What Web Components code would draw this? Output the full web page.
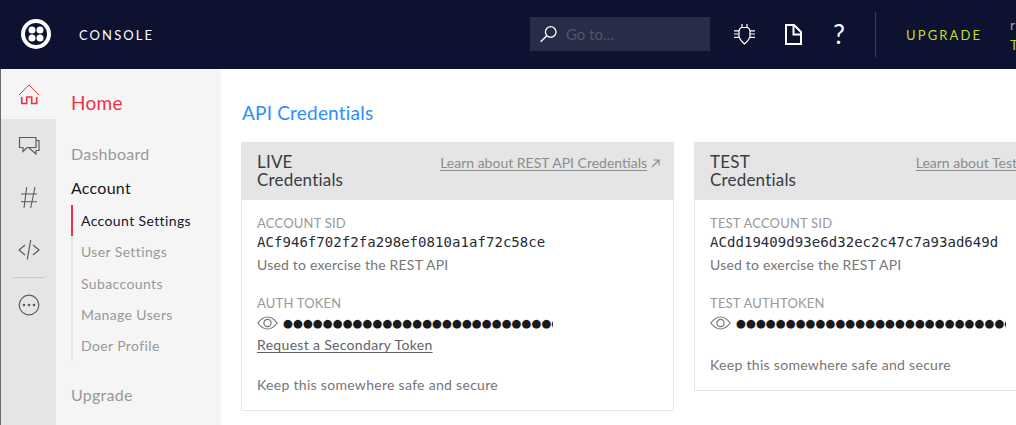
<!DOCTYPE html>
<html>
<head>
<meta charset="utf-8">
<title>Console</title>
<style>
    html, body { margin: 0; height: 100%; overflow: hidden; background: #fff; }
    body { font-family: Lato, "Open Sans", sans-serif; }
    #page { display: flex; flex-direction: column; height: 425px; width: 1016px; overflow: hidden; }
    #body { display: flex; flex: 1; min-height: 0; }
</style>
</head>
<body>
<div id="page">
    <top-bar></top-bar>
    <div id="body">
        <icon-rail></icon-rail>
        <side-nav></side-nav>
        <main-panel>
            <cred-card heading="LIVE" link="Learn about REST API Credentials"
                sid-label="ACCOUNT SID" sid="ACf946f702f2fa298ef0810a1af72c58ce"
                token-label="AUTH TOKEN" secondary></cred-card>
            <cred-card style="--more-shift: 10px" heading="TEST" link="Learn about Test Credentials"
                sid-label="TEST ACCOUNT SID" sid="ACdd19409d93e6d32ec2c47c7a93ad649d"
                token-label="TEST AUTHTOKEN"></cred-card>
        </main-panel>
    </div>
</div>

<script>
class TopBar extends HTMLElement {
    constructor() {
        super();
        this.attachShadow({ mode: 'open' });
    }

    connectedCallback() {
        this.shadowRoot.innerHTML = `
            <style>
                :host {
                    display: flex;
                    align-items: center;
                    flex: none;
                    height: 69px;
                    padding-bottom: 1px;
                    background: #0c1230;
                    box-sizing: border-box;
                    border-left: 1px solid #0c1230;
                    overflow: hidden;
                }
                .logo { width: 30px; height: 30px; margin-left: 20px; flex: none; }
                .name {
                    margin: 2px 0 0 28px;
                    width: 451px;
                    flex: none;
                    color: #fff;
                    font-size: 13px;
                    letter-spacing: 2.1px;
                }
                .search {
                    display: flex;
                    align-items: center;
                    width: 180px;
                    height: 34px;
                    flex: none;
                    background: #282d47;
                    color: #50556b;
                    font-size: 15px;
                }
                .search svg { margin-left: 10px; margin-right: 8px; }
                .tool { flex: none; display: block; }
                .tool.bug { margin-left: 24px; }
                .tool.doc { margin-left: 29px; }
                .help {
                    margin-left: 30px;
                    width: 14px;
                    flex: none;
                    color: #fff;
                    font-size: 26px;
                    line-height: 1;
                    text-align: center;
                }
                .divider {
                    width: 1px;
                    height: 45px;
                    margin-left: 29px;
                    flex: none;
                    background: #3a3f56;
                }
                .upgrade {
                    margin: 2px 0 0 30px;
                    width: 104px;
                    flex: none;
                    color: #c8db2a;
                    font-size: 13px;
                    letter-spacing: 2.15px;
                }
                .user { flex: none; margin-top: 1px; font-size: 14px; line-height: 20px; white-space: nowrap; }
                .user div:first-child { color: #9a9dab; }
                .user div:last-child { color: #b5d334; }
            </style>
            <svg class="logo" viewBox="0 0 30 30">
                <circle cx="15" cy="15" r="13" fill="none" stroke="#fff" stroke-width="4"/>
                <circle cx="11" cy="11" r="3.5" fill="#fff"/>
                <circle cx="19" cy="11" r="3.5" fill="#fff"/>
                <circle cx="11" cy="19" r="3.5" fill="#fff"/>
                <circle cx="19" cy="19" r="3.5" fill="#fff"/>
            </svg>
            <span class="name">CONSOLE</span>
            <div class="search">
                <svg width="18" height="18" viewBox="0 0 18 18" fill="none" stroke="#fff">
                    <circle cx="10.7" cy="7" r="5.3" stroke-width="1.3"/>
                    <path d="M6.800 10.800 .7 16.800" stroke-width="1.5"/>
                </svg>
                <span>Go to...</span>
            </div>
            <svg class="tool bug" width="21" height="21" viewBox="0 0 21 21" fill="none" stroke="#fff" stroke-width="1.2">
                <path d="M7.500 3.500h6q2.500 1 2.500 4v4.500q0 3-5.500 8q-5.500-5-5.500-8V7.500q0-3 2.500-4z"/>
                <path d="M8 0v3.500M13 0v3.500M0 6.800h5M0 10h5M0 13.300h5M16 6.800h5M16 10h5M16 13.300h5"/>
            </svg>
            <svg class="tool doc" width="18" height="21" viewBox="0 0 18 21" fill="none" stroke="#fff" stroke-width="2">
                <path d="M2 1h8l7 7v12H2zM9.500 1v9.500H17"/>
            </svg>
            <span class="help">?</span>
            <span class="divider"></span>
            <span class="upgrade">UPGRADE</span>
            <div class="user"><div>r</div><div>T</div></div>
        `;
    }
}

class IconRail extends HTMLElement {
    constructor() {
        super();
        this.attachShadow({ mode: 'open' });
    }

    connectedCallback() {
        this.shadowRoot.innerHTML = `
            <style>
                :host {
                    display: flex;
                    flex-direction: column;
                    flex: none;
                    width: 56px;
                    box-sizing: border-box;
                    border-left: 1px solid #6b6b6b;
                    background: #e5e5e5;
                }
                .item {
                    display: flex;
                    align-items: center;
                    justify-content: center;
                    box-sizing: border-box;
                    padding-left: 1px;
                    flex: none;
                }
                .item.home { height: 50px; padding-top: 2px; background: #f5f5f5; }
                .item.msg { height: 56px; }
                .item.hash { height: 46px; }
                .item.code { height: 56px; }
                .rule { height: 1px; margin: 0 11px 0 12px; background: #c9c9c9; flex: none; }
                .item.more { height: 54px; }
                svg { display: block; fill: none; stroke: #565b66; stroke-width: 1.2; }
                .home svg { stroke: #f22f46; }
            </style>
            <div class="item home">
                <svg width="22" height="22" viewBox="0 0 22 22">
                    <path d="M1 11 11 1l10 10" stroke-width="1"/>
                    <path d="M3.700 13v6.500h5V13h5v6.500h5V13" stroke-width="1.600"/>
                </svg>
            </div>
            <div class="item msg">
                <svg width="22" height="22" viewBox="0 0 22 22">
                    <path d="M1.500 1.500H18V11.500H9L5 15.500V11.500H1.500Z"/>
                    <path d="M18 4.500H21V14.500H18V18L10.500 11.500"/>
                </svg>
            </div>
            <div class="item hash">
                <svg width="22" height="22" viewBox="0 0 22 22">
                    <path d="M8.700 0 6 21M17 0 12.700 21M3 7h16M3 14.700h16" stroke-width="1.100"/>
                </svg>
            </div>
            <div class="item code">
                <svg width="22" height="22" viewBox="0 0 22 22">
                    <path d="M7 7 1 12l6 5M15 7l6 5-6 5M12.700 2 9.300 21.500"/>
                </svg>
            </div>
            <div class="rule"></div>
            <div class="item more">
                <svg width="22" height="22" viewBox="0 0 22 22">
                    <circle cx="11" cy="11" r="9.800"/>
                    <circle cx="6" cy="11" r="1.300" fill="#565b66" stroke="none"/>
                    <circle cx="11" cy="11" r="1.300" fill="#565b66" stroke="none"/>
                    <circle cx="16" cy="11" r="1.300" fill="#565b66" stroke="none"/>
                </svg>
            </div>
        `;
    }
}

class SideNav extends HTMLElement {
    constructor() {
        super();
        this.attachShadow({ mode: 'open' });
    }

    connectedCallback() {
        this.shadowRoot.innerHTML = `
            <style>
                :host {
                    display: block;
                    flex: none;
                    width: 165px;
                    box-sizing: border-box;
                    padding: 21px 0 0 15px;
                    background: #f5f5f5;
                    color: #999;
                }
                .home { color: #f22f46; font-size: 19px; line-height: 26px; letter-spacing: .3px; }
                .top { font-size: 16px; line-height: 22px; letter-spacing: .25px; }
                .dash { margin-top: 27px; }
                .acct { margin-top: 12px; color: #14171f; }
                ul { list-style: none; margin: 6px 0 0; padding: 0; border-left: 2px solid #e5e5e5; }
                li {
                    height: 31.250px;
                    padding-left: 8px;
                    margin-left: -2px;
                    border-left: 2px solid transparent;
                    font-size: 14px;
                    line-height: 31px;
                    letter-spacing: .38px;
                    white-space: nowrap;
                }
                li.active { color: #14171f; border-left-color: #f22f46; }
                .upgrade { margin-top: 23px; }
            </style>
            <div class="home">Home</div>
            <div class="top dash">Dashboard</div>
            <div class="top acct">Account</div>
            <ul>
                <li class="active">Account Settings</li>
                <li>User Settings</li>
                <li>Subaccounts</li>
                <li>Manage Users</li>
                <li>Doer Profile</li>
            </ul>
            <div class="top upgrade">Upgrade</div>
        `;
    }
}

class MainPanel extends HTMLElement {
    constructor() {
        super();
        this.attachShadow({ mode: 'open' });
    }

    connectedCallback() {
        this.shadowRoot.innerHTML = `
            <style>
                :host {
                    display: block;
                    flex: 1;
                    min-width: 0;
                    box-sizing: border-box;
                    padding: 31px 0 0 20px;
                    overflow: hidden;
                }
                h1 {
                    margin: 0 0 16px 1px;
                    color: #2b90ff;
                    font-size: 19px;
                    font-weight: 400;
                    line-height: 26px;
                    letter-spacing: .2px;
                }
                .cards { display: flex; align-items: flex-start; gap: 20px; }
            </style>
            <h1>API Credentials</h1>
            <div class="cards"><slot></slot></div>
        `;
    }
}

class CredCard extends HTMLElement {
    constructor() {
        super();
        this.attachShadow({ mode: 'open' });
    }

    connectedCallback() {
        const dots = '\u25CF'.repeat(32);
        const secondary = this.hasAttribute('secondary')
            ? '<a class="secondary">Request a Secondary Token</a>'
            : '<div class="blank"></div>';
        this.shadowRoot.innerHTML = `
            <style>
                :host {
                    display: block;
                    flex: none;
                    width: 433px;
                    box-sizing: border-box;
                    border: 1px solid #e5e5e5;
                    border-top: 0;
                    background: #fff;
                    color: #767676;
                }
                header {
                    display: flex;
                    justify-content: space-between;
                    height: 58px;
                    box-sizing: border-box;
                    margin: 0 -1px;
                    padding: 11px 14px 0 16px;
                    background: #e5e5e5;
                }
                .title { color: #383c44; font-size: 17px; line-height: 18px; letter-spacing: .2px; }
                .more {
                    display: flex;
                    gap: 4px;
                    margin-right: var(--more-shift, 0);
                    color: #8c8c8c;
                    font-size: 14px;
                    line-height: 19px;
                    white-space: nowrap;
                }
                .more u { text-underline-offset: 2px; }
                .more svg { margin-top: 6px; flex: none; }
                section { padding: 15px 14px 17px 15px; }
                .label { color: #999; font-size: 13px; line-height: 16px; letter-spacing: .2px; }
                .sid {
                    margin-top: 1px;
                    color: #282c34;
                    font-family: "DejaVu Sans Mono", monospace;
                    font-size: 14px;
                    line-height: 20px;
                    letter-spacing: .05px;
                    white-space: nowrap;
                }
                .note { font-size: 14px; line-height: 16px; letter-spacing: .2px; }
                .sid + .note { margin-top: 5px; }
                .token-label { margin-top: 22px; }
                .token { display: flex; align-items: center; height: 20px; margin: 2px 0 1px; }
                .token svg { flex: none; display: block; }
                .dots {
                    width: 270px;
                    margin-left: 5px;
                    overflow: hidden;
                    color: #1a1a1a;
                    font-family: "DejaVu Sans", sans-serif;
                    font-size: 11.400px;
                    line-height: 20px;
                    white-space: nowrap;
                }
                .secondary {
                    display: block;
                    height: 22px;
                    color: #5f6369;
                    font-size: 14px;
                    line-height: 22px;
                    letter-spacing: .32px;
                    text-decoration: underline;
                    text-underline-offset: 2px;
                }
                .blank { height: 2px; }
                .keep { margin-top: 21px; letter-spacing: .3px; }
            </style>
            <header>
                <div class="title">${this.getAttribute('heading')}<br>Credentials</div>
                <div class="more">
                    <u>${this.getAttribute('link')}</u>
                    <svg width="9" height="9" viewBox="0 0 9 9" fill="none" stroke="#8c8c8c" stroke-width="1.200">
                        <path d="M1 8 8 1M2.500 1H8v5.500"/>
                    </svg>
                </div>
            </header>
            <section>
                <div class="label">${this.getAttribute('sid-label')}</div>
                <div class="sid">${this.getAttribute('sid')}</div>
                <div class="note">Used to exercise the REST API</div>
                <div class="label token-label">${this.getAttribute('token-label')}</div>
                <div class="token">
                    <svg width="21" height="14" viewBox="0 0 21 14" fill="none" stroke="#767676" stroke-width="1.200">
                        <path d="M.8 7C4 2.800 7 1 10.500 1S17 2.800 20.200 7C17 11.200 14 13 10.500 13S4 11.200 .8 7z"/>
                        <circle cx="10.500" cy="7" r="3.600"/>
                    </svg>
                    <div class="dots">${dots}</div>
                </div>
                ${secondary}
                <div class="note keep">Keep this somewhere safe and secure</div>
            </section>
        `;
    }
}

customElements.define('top-bar', TopBar);
customElements.define('icon-rail', IconRail);
customElements.define('side-nav', SideNav);
customElements.define('main-panel', MainPanel);
customElements.define('cred-card', CredCard);
</script>
</body>
</html>
